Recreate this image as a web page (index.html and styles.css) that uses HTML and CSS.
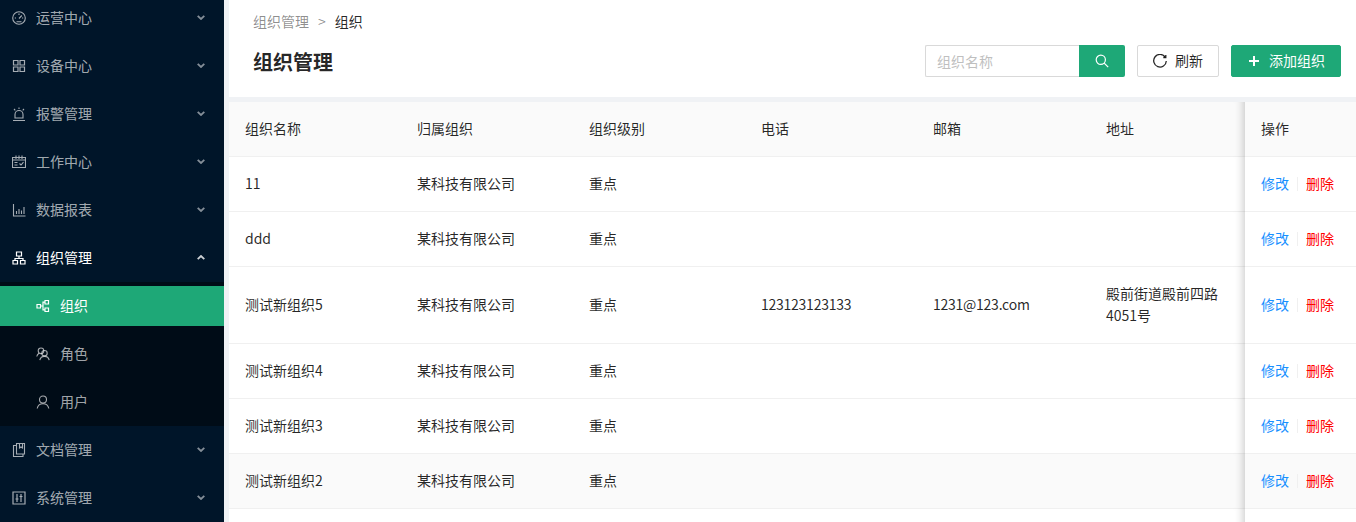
FILE: index.html
```html
<!DOCTYPE html>
<html lang="zh">
<head>
    <meta charset="UTF-8">
    <meta name="viewport" content="width=device-width, initial-scale=1.0">
    <title>组织管理</title>
    <link rel="stylesheet" href="styles.css">
</head>
<body>
    <div class="layout">
        <div class="sider">
            <ul class="menu">
                <li class="menu-item">
                    <svg class="icon" viewBox="0 0 14 14"><circle cx="7" cy="7" r="6.3"/><path d="M7 7.5l2.8-3M7 2.500v1.500M2.800 7h1.200M10 7h1.200M4.500 10.800h5"/></svg>
                    <span class="menu-text">运营中心</span>
                    <svg class="arrow" viewBox="0 0 8 5"><path d="M.7.8L4 4l3.300-3.200"/></svg>
                </li>
                <li class="menu-item">
                    <svg class="icon icon-bold" viewBox="0 0 14 14"><path d="M1.500 1.500H6V6H1.500zM8 1.500h4.500V6H8zM1.500 8H6v4.500H1.500zM8 8h4.500v4.500H8z"/></svg>
                    <span class="menu-text">设备中心</span>
                    <svg class="arrow" viewBox="0 0 8 5"><path d="M.7.8L4 4l3.300-3.200"/></svg>
                </li>
                <li class="menu-item">
                    <svg class="icon" viewBox="0 0 14 14"><path d="M3 11V7.500a4 4 0 0 1 8 0V11zM1 13.500h12M7 .5v1.500M2 2l1.300 1.300M12 2l-1.300 1.300"/></svg>
                    <span class="menu-text">报警管理</span>
                    <svg class="arrow" viewBox="0 0 8 5"><path d="M.7.8L4 4l3.300-3.200"/></svg>
                </li>
                <li class="menu-item">
                    <svg class="icon" viewBox="0 0 14 14"><path d="M.5 2.500h13v10H.5zM4 .5v3.500M7 .5v3.500M10 .5v3.500M.5 5h13M2.500 7.500h3M2.500 10h3M7.500 8.500L9 10l2.500-2.800"/></svg>
                    <span class="menu-text">工作中心</span>
                    <svg class="arrow" viewBox="0 0 8 5"><path d="M.7.8L4 4l3.300-3.200"/></svg>
                </li>
                <li class="menu-item">
                    <svg class="icon" viewBox="0 0 14 14"><path d="M1.500 1v12h12M4.500 11V8M7 11V6M9.500 11V7.500M12 11V4"/></svg>
                    <span class="menu-text">数据报表</span>
                    <svg class="arrow" viewBox="0 0 8 5"><path d="M.7.8L4 4l3.300-3.200"/></svg>
                </li>
                <li class="menu-item open">
                    <svg class="icon icon-bold" viewBox="0 0 14 14"><path d="M4.500 1h5v4h-5zM7 5v2.500M3 9.500v-2h8v2M1 9.500h4.500V13H1zM8.500 9.500H13V13H8.500z"/></svg>
                    <span class="menu-text">组织管理</span>
                    <svg class="arrow" viewBox="0 0 8 5"><path d="M.7 4.200L4 1l3.300 3.200"/></svg>
                </li>
                <li>
                    <ul class="submenu">
                        <li class="sub-item selected">
                            <svg class="icon icon-bold" viewBox="0 0 14 14"><path d="M1 5.500h3.500V9H1zM9 1.500h3.500V5H9zM9 9h3.500v3.500H9zM4.500 7H7V3.200h2M7 7v3.800h2"/></svg>
                            <span class="menu-text">组织</span>
                        </li>
                        <li class="sub-item">
                            <svg class="icon" viewBox="0 0 14 14"><circle cx="5" cy="3.800" r="2.800"/><circle cx="8.500" cy="6.200" r="2.700"/><path d="M.8 9.500A5 5 0 0 1 3 6.300M3.800 13.200a4.800 4.800 0 0 1 9.400 0"/></svg>
                            <span class="menu-text">角色</span>
                        </li>
                        <li class="sub-item">
                            <svg class="icon" viewBox="0 0 14 14"><circle cx="7" cy="4.500" r="3.500"/><path d="M1.200 13.500a5.900 5.900 0 0 1 11.600 0"/></svg>
                            <span class="menu-text">用户</span>
                        </li>
                    </ul>
                </li>
                <li class="menu-item">
                    <svg class="icon" viewBox="0 0 14 14"><path d="M4.500 2.500h-3v11H11V11M4.500 11V.5h8V11zM7.500.5V5L9 4l1.500 1V.5"/></svg>
                    <span class="menu-text">文档管理</span>
                    <svg class="arrow" viewBox="0 0 8 5"><path d="M.7.8L4 4l3.300-3.200"/></svg>
                </li>
                <li class="menu-item">
                    <svg class="icon icon-bold" viewBox="0 0 14 14"><path d="M1 1h12v12H1zM5 3v8M9 3v8M3.500 8h3M7.500 5.500h3"/></svg>
                    <span class="menu-text">系统管理</span>
                    <svg class="arrow" viewBox="0 0 8 5"><path d="M.7.8L4 4l3.300-3.200"/></svg>
                </li>
            </ul>
        </div>

        <div class="main">
            <div class="page-header">
                <div class="breadcrumb">
                    <span class="crumb">组织管理</span>
                    <span class="crumb-sep">&gt;</span>
                    <span>组织</span>
                </div>
                <div class="title-row">
                    <h1>组织管理</h1>
                    <div class="toolbar">
                        <div class="search">
                            <input type="text" placeholder="组织名称">
                            <button class="search-btn">
                                <svg viewBox="0 0 14 14"><circle cx="5.800" cy="5.800" r="4.600"/><path d="M9.200 9.200l4 4"/></svg>
                            </button>
                        </div>
                        <button class="btn">
                            <svg viewBox="0 0 14 14"><path d="M12.300 3.300A6.300 6.300 0 1 0 13.300 7"/><path d="M12.800 1v2.500h-2.500"/></svg>
                            <span class="btn-text">刷新</span>
                        </button>
                        <button class="btn btn-primary">
                            <svg viewBox="0 0 14 14"><path d="M7 2v10M2 7h10"/></svg>
                            <span class="btn-text">添加组织</span>
                        </button>
                    </div>
                </div>
            </div>

            <div class="table-wrap">
                <table>
                    <thead>
                        <tr><th>组织名称</th><th>归属组织</th><th>组织级别</th><th>电话</th><th>邮箱</th><th>地址</th><th class="fixed">操作</th></tr>
                    </thead>
                    <tbody>
                        <tr><td>11</td><td>某科技有限公司</td><td>重点</td><td></td><td></td><td></td><td class="fixed"><a class="edit">修改</a><i class="divider"></i><a class="del">删除</a></td></tr>
                        <tr><td>ddd</td><td>某科技有限公司</td><td>重点</td><td></td><td></td><td></td><td class="fixed"><a class="edit">修改</a><i class="divider"></i><a class="del">删除</a></td></tr>
                        <tr><td>测试新组织5</td><td>某科技有限公司</td><td>重点</td><td class="latin">123123123133</td><td class="latin">1231@123.com</td><td>殿前街道殿前四路4051号</td><td class="fixed"><a class="edit">修改</a><i class="divider"></i><a class="del">删除</a></td></tr>
                        <tr><td>测试新组织4</td><td>某科技有限公司</td><td>重点</td><td></td><td></td><td></td><td class="fixed"><a class="edit">修改</a><i class="divider"></i><a class="del">删除</a></td></tr>
                        <tr><td>测试新组织3</td><td>某科技有限公司</td><td>重点</td><td></td><td></td><td></td><td class="fixed"><a class="edit">修改</a><i class="divider"></i><a class="del">删除</a></td></tr>
                        <tr class="hover"><td>测试新组织2</td><td>某科技有限公司</td><td>重点</td><td></td><td></td><td></td><td class="fixed"><a class="edit">修改</a><i class="divider"></i><a class="del">删除</a></td></tr>
                        <tr><td></td><td></td><td></td><td></td><td></td><td></td><td class="fixed"></td></tr>
                    </tbody>
                </table>
            </div>
        </div>
    </div>
</body>
</html>
```

FILE: styles.css
```css
html, body {
    height: 100%;
    margin: 0;
    overflow: hidden;
}

body {
    font-family: "Noto Sans CJK SC", sans-serif;
    font-size: 14px;
    color: rgba(0, 0, 0, 0.85);
    background-color: #f0f2f5;
}

.layout {
    display: flex;
    height: 522px;
    overflow: hidden;
}

/* menu */
.sider {
    width: 224px;
    flex-shrink: 0;
    background-color: #001529;
    overflow: hidden;
}

.menu, .submenu {
    list-style: none;
    margin: 0;
    padding: 0;
}

.menu {
    margin-top: -6px;
}

.menu-item {
    display: flex;
    align-items: center;
    height: 48px;
    padding: 0 19px 0 12px;
    color: rgba(255, 255, 255, 0.65);
}

.menu-item.open {
    color: #fff;
}

.icon {
    width: 14px;
    height: 14px;
    margin-right: 10px;
    flex-shrink: 0;
    fill: none;
    stroke: currentColor;
    stroke-width: 1.1;
}

.icon-bold {
    stroke-width: 1.2;
}

.menu-text {
    flex: 1;
    padding-bottom: 2px;
}

.arrow {
    width: 8px;
    height: 5px;
    margin-bottom: 1px;
    fill: none;
    stroke: currentColor;
    stroke-width: 1.8;
    opacity: 0.8;
}

.submenu {
    padding: 4px 0;
    background-color: #000c17;
}

.sub-item {
    display: flex;
    align-items: center;
    height: 40px;
    margin-bottom: 8px;
    padding-left: 36px;
    color: rgba(255, 255, 255, 0.65);
}

.sub-item:last-child {
    margin-bottom: 0;
}

.sub-item.selected {
    background-color: #1ea877;
    color: #fff;
}

/* header */
.main {
    flex: 1;
    min-width: 0;
    margin-left: 5px;
}

.page-header {
    height: 97px;
    padding: 11px 15px 0 24px;
    box-sizing: border-box;
    background-color: #fff;
}

.breadcrumb {
    display: flex;
    align-items: center;
    height: 20px;
}

.crumb {
    color: rgba(0, 0, 0, 0.45);
}

.crumb-sep {
    margin: 0 9px;
    color: rgba(0, 0, 0, 0.45);
}

.title-row {
    display: flex;
    align-items: center;
    justify-content: space-between;
    margin-top: 14px;
    height: 32px;
}

h1 {
    margin: 0;
    font-size: 20px;
    font-weight: 700;
}

.toolbar {
    display: flex;
    gap: 12px;
}

.search {
    display: flex;
}

.search input {
    width: 154px;
    height: 32px;
    padding: 0 11px;
    box-sizing: border-box;
    border: 1px solid #d9d9d9;
    border-right: none;
    border-radius: 2px 0 0 2px;
    font-family: inherit;
    font-size: 14px;
    outline: none;
}

.search input::placeholder {
    color: #bfbfbf;
}

.search-btn {
    display: flex;
    align-items: center;
    justify-content: center;
    width: 46px;
    height: 32px;
    padding: 0;
    border: none;
    border-radius: 0 2px 2px 0;
    background-color: #1ea877;
}

.search-btn svg {
    width: 14px;
    height: 14px;
    fill: none;
    stroke: #fff;
    stroke-width: 1.2;
}

.btn {
    display: flex;
    align-items: center;
    gap: 8px;
    height: 32px;
    padding: 0 15px;
    box-sizing: border-box;
    border: 1px solid #d9d9d9;
    border-radius: 2px;
    background-color: #fff;
    font-family: inherit;
    font-size: 14px;
    color: rgba(0, 0, 0, 0.85);
}

.btn svg {
    width: 14px;
    height: 14px;
    fill: none;
    stroke: currentColor;
    stroke-width: 1.3;
}

.btn-primary svg {
    stroke-width: 2;
}

.btn-text {
    padding-bottom: 2px;
}

.btn-primary {
    border-color: #1ea877;
    background-color: #1ea877;
    color: #fff;
}

/* table */
.table-wrap {
    margin-top: 5px;
    background-color: #fff;
    height: 420px;
    overflow: hidden;
}

table {
    width: 100%;
    table-layout: fixed;
    border-collapse: separate;
    border-spacing: 0;
}

th, td {
    padding: 15px 16px 17px;
    text-align: left;
    font-weight: 400;
    line-height: 22px;
    border-bottom: 1px solid #f0f0f0;
    box-sizing: border-box;
}

th {
    background-color: #fafafa;
}

th:nth-child(-n+4) {
    width: 172px;
}

th:nth-child(5) {
    width: 173px;
}

th:nth-child(6) {
    width: 155px;
}

.latin {
    letter-spacing: -0.25px;
}

.fixed {
    position: relative;
    background-color: #fff;
    white-space: nowrap;
}

.fixed::after {
    content: "";
    position: absolute;
    top: 0;
    bottom: -1px;
    left: -30px;
    width: 30px;
    box-shadow: inset -10px 0 8px -8px rgba(0, 0, 0, 0.2);
}

th.fixed {
    background-color: #fafafa;
}

.hover td {
    background-color: #fafafa;
}

.edit {
    color: #1890ff;
}

.del {
    color: #ff0000;
}

.divider {
    display: inline-block;
    width: 1px;
    height: 14px;
    margin: 0 8px;
    vertical-align: -2px;
    background-color: #f0f0f0;
}
```
